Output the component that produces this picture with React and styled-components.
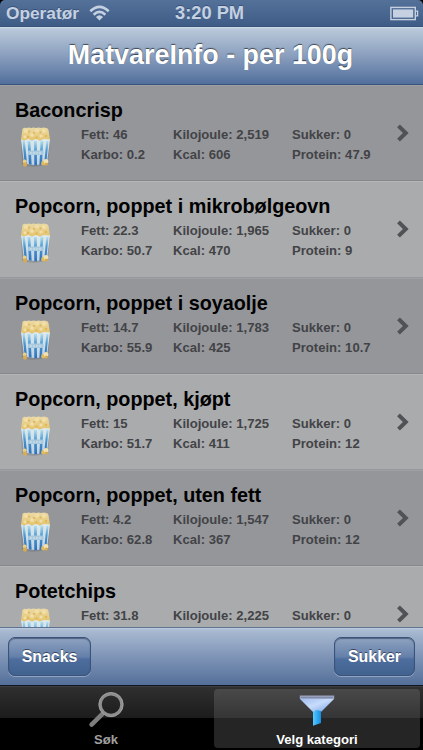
import React from 'react'
import styled, { createGlobalStyle, css } from 'styled-components'

const GlobalStyle = createGlobalStyle`
*{
  box-sizing: border-box;
}
body{
  margin: 0;
  background: #000;
  font-family: "Liberation Sans", Arial, sans-serif;
  font-weight: 700;
  overflow: hidden;
}
`

const Screen = styled.div`
width: 423px;
height: 750px;
display: flex;
flex-direction: column;
overflow: hidden;
background: #000;
`
const StatusBar = styled.div`
flex: none;
height: 26px;
padding: 0 4px 0 6px;
display: grid;
grid-template-columns: 169px auto 1fr;
align-items: center;
background: linear-gradient(#54719a, #3f5c86);
border-radius: 5px 5px 0 0;
color: #c5d1e1;
line-height: 26px;
text-shadow: 0 -1px 0 rgba(30,50,85,0.45);
`
const Carrier = styled.div`
display: flex;
align-items: center;
gap: 10px;
font-size: 17.3px;
white-space: nowrap;
`
const Clock = styled.div`
font-size: 18.3px;
`
const Battery = styled.div`
display: flex;
justify-content: flex-end;
`
const NavBar = styled.div`
flex: none;
height: 59px;
display: flex;
justify-content: center;
border-top: 1px solid #39557e;
border-bottom: 1px solid #38537c;
background: linear-gradient(#d0dce8 0, #b9c9da 2px, #8b9fbe 50%, #516f9c 100%);
`
const Heading = styled.h1`
margin: 0;
padding-right: 2px;
font-size: 26.9px;
line-height: 57px;
color: #fff;
text-shadow: 0 -1px 1px rgba(0,0,0,0.6);
white-space: nowrap;
`
const List = styled.div`
flex: none;
height: 542px;
overflow: hidden;
`
const Row = styled.div`
height: 96.3px;
padding: 13px 14px 0 15px;
border-top: 1px solid ${props => props.$light ? '#b4b5b7' : '#9fa0a4'};
border-bottom: 1px solid ${props => props.$light ? '#97989b' : '#86878b'};
background: ${props => props.$light ? '#aaabad' : '#95969a'};
display: grid;
grid-template-columns: 1fr 12px;
`
const Name = styled.div`
font-size: 19.8px;
line-height: 22px;
color: #000;
white-space: nowrap;
`
const Details = styled.div`
display: grid;
grid-template-columns: 66px 92px 119px 90px;
align-items: start;
padding-top: 3px;
`
const Picture = styled.div`
height: 44px;
padding: 2px 0 0 4px;
`
const Facts = styled.div`
padding-top: 1px;
font-size: 13.1px;
line-height: 20px;
color: #424346;
white-space: nowrap;
`
const Arrow = styled.div`
padding-top: 25px;
`
const Toolbar = styled.div`
flex: none;
height: 58px;
padding: 9px 8px 0;
display: flex;
justify-content: space-between;
align-items: flex-start;
border-top: 1px solid #5f7391;
background: linear-gradient(#c1cee0 0, #a9bad1 2px, #7f95b7 50%, #536f99 100%);
`
const BarButton = styled.button`
width: ${props => props.$width};
height: 39px;
padding: 0;
border: 1px solid #3a537b;
border-radius: 7px;
background: linear-gradient(#8fa3c1, #6580aa 50%, #4d6d9e 58%, #42628f);
box-shadow: inset 0 1px 1px rgba(30,45,75,0.55), 0 1px 0 rgba(200,215,235,0.45);
color: #fff;
font: 700 15.9px "Liberation Sans", Arial, sans-serif;
text-shadow: 0 -1px 0 rgba(0,0,0,0.5);
`
const TabBar = styled.div`
flex: none;
height: 65px;
padding: 3px 3px 3px 2px;
display: grid;
grid-template-columns: 208px 206px;
justify-content: space-between;
border-top: 1px solid #11151d;
box-shadow: inset 0 1px 0 #3c3d40;
background: linear-gradient(#303030 0, #1c1c1c 32px, #000 32px);
`
const Tab = styled.div`
display: flex;
flex-direction: column;
align-items: center;
padding-top: 3px;
color: #a0a0a0;
font-size: 13.1px;
line-height: 16px;

svg{
  display: block;
  margin-bottom: 4px;
}

${props => props.$active && css`
  color: #fff;
  border-radius: 4px;
  background: linear-gradient(#494949 0, #353535 29px, #252525 29px);
`}
`

const foods = [
  { name: 'Baconcrisp', fett: '46', karbo: '0.2', kj: '2,519', kcal: '606', sukker: '0', protein: '47.9' },
  { name: 'Popcorn, poppet i mikrobølgeovn', fett: '22.3', karbo: '50.7', kj: '1,965', kcal: '470', sukker: '0', protein: '9' },
  { name: 'Popcorn, poppet i soyaolje', fett: '14.7', karbo: '55.9', kj: '1,783', kcal: '425', sukker: '0', protein: '10.7' },
  { name: 'Popcorn, poppet, kjøpt', fett: '15', karbo: '51.7', kj: '1,725', kcal: '411', sukker: '0', protein: '12' },
  { name: 'Popcorn, poppet, uten fett', fett: '4.2', karbo: '62.8', kj: '1,547', kcal: '367', sukker: '0', protein: '12' },
  { name: 'Potetchips', fett: '31.8', kj: '2,225', sukker: '0' },
]

const Wifi = () => (
  <svg width="21" height="16" viewBox="0 0 22 17" fill="none" stroke="#c5d1e1" strokeWidth="2.8">
    <path d="M1.2 6.6Q11 -2.8 20.8 6.6" />
    <path d="M4.8 10.4Q11 4.4 17.2 10.4" />
    <path d="M7.2 12.8Q11 9.2 14.8 12.8L11 16.6Z" fill="#c5d1e1" stroke="none" />
  </svg>
)

const BatteryIcon = () => (
  <svg width="29" height="15" viewBox="0 0 29 15">
    <rect x="0.9" y="1.4" width="24.4" height="12.2" fill="none" stroke="#c5d1e1" strokeWidth="1.4" />
    <rect x="3" y="3.4" width="20.2" height="8.2" fill="#c5d1e1" />
    <path d="M25.6 5.2H27.6V9.8H25.6" fill="none" stroke="#c5d1e1" strokeWidth="1.3" />
  </svg>
)

const Popcorn = () => (
  <svg width="34" height="43" viewBox="0 0 34 43">
    <defs>
      <linearGradient id="corn" x1="0" y1="0" x2="0" y2="1">
        <stop offset="0" stopColor="#ead9a6" />
        <stop offset="1" stopColor="#e6c570" />
      </linearGradient>
      <linearGradient id="stripe" x1="0" y1="0" x2="0" y2="1">
        <stop offset="0" stopColor="#b4dcea" />
        <stop offset="0.4" stopColor="#4f9bd2" />
        <stop offset="1" stopColor="#2f6fb8" />
      </linearGradient>
      <linearGradient id="paper" x1="0" y1="0" x2="0" y2="1">
        <stop offset="0" stopColor="#dcebee" />
        <stop offset="1" stopColor="#bfd3e3" />
      </linearGradient>
    </defs>
    <path d="M3 39Q16 43 29 38L31 15H2Z" fill="#55575c" opacity="0.25" />
    <path d="M3.5 3Q5 1 7.5 2Q10 0.8 12 2Q15 0.8 17 2Q20 0.8 22 2Q25 0.8 27 2Q29 2 29.5 4L31 14H2Z" fill="url(#corn)" />
    <g fill="#f0dfa8">
      <circle cx="7" cy="5" r="2" />
      <circle cx="13" cy="9" r="1.9" />
      <circle cx="18" cy="4.5" r="2" />
      <circle cx="25" cy="5" r="2" />
      <circle cx="22" cy="10" r="1.6" />
      <circle cx="6" cy="11" r="1.4" />
    </g>
    <g fill="#dfb75c">
      <circle cx="10" cy="5.5" r="1.1" />
      <circle cx="15" cy="7" r="1.1" />
      <circle cx="21.5" cy="6.4" r="1.1" />
      <circle cx="9" cy="11" r="1.2" />
      <circle cx="17.5" cy="11.5" r="1.2" />
      <circle cx="27" cy="10" r="1.2" />
    </g>
    <path d="M2 13.5L5 14.5L9 13L13 14.5L17 13L21 14.5L25 13L31 13.5L28 37Q16 41 5 37Z" fill="url(#paper)" />
    <g fill="url(#stripe)">
      <path d="M3.5 15L5.8 15L8 37.5L5.6 37Z" />
      <path d="M8.6 15H11.4L12.6 38.8L9.9 38.3Z" />
      <path d="M15 15H17.8L18 39.2H15.3Z" />
      <path d="M21.6 15H24.4L22.9 38.4L20.4 38.9Z" />
      <path d="M27.4 15H29.5L27.3 37L25.2 37.5Z" />
    </g>
    <rect x="9" y="24.5" width="15.5" height="4.6" rx="1" fill="#a9c9df" />
    <path d="M11 27H22" stroke="#d8e6ee" strokeWidth="1.2" strokeDasharray="2 1" />
    <circle cx="5.8" cy="35.5" r="2" fill="#e6cf8c" />
    <circle cx="6" cy="38.6" r="2.1" fill="#d9ac50" />
    <circle cx="24.5" cy="37.2" r="2.4" fill="#dfb95f" />
    <circle cx="27" cy="35.4" r="2.4" fill="#f1e2b4" />
    <circle cx="27.3" cy="38" r="1.5" fill="#d9ac50" />
  </svg>
)

const Chevron = () => (
  <svg width="12" height="18" viewBox="0 0 12 18" fill="none" stroke="#515256" strokeWidth="4">
    <path d="M1.5 1.9L8.8 9L1.5 16.1" />
  </svg>
)

const Magnifier = () => (
  <svg width="36" height="36" viewBox="0 0 36 36" fill="none">
    <path d="M14.2 22.2L3.6 32.6" stroke="#7e7e7e" strokeWidth="4.6" strokeLinecap="round" />
    <circle cx="23" cy="12.6" r="10.8" stroke="#8e8e8e" strokeWidth="3.2" />
    <circle cx="23" cy="12.6" r="12.1" stroke="#a6a6a6" strokeWidth="0.7" />
  </svg>
)

const Funnel = () => (
  <svg width="36" height="36" viewBox="0 0 36 36">
    <defs>
      <linearGradient id="cone" x1="0" y1="0" x2="1" y2="1">
        <stop offset="0" stopColor="#9fbdf0" />
        <stop offset="0.45" stopColor="#c8dcfb" />
        <stop offset="1" stopColor="#6f9fe6" />
      </linearGradient>
      <linearGradient id="spout" x1="0" y1="0" x2="1" y2="0">
        <stop offset="0" stopColor="#58c9fb" />
        <stop offset="1" stopColor="#128ee4" />
      </linearGradient>
    </defs>
    <path d="M1 7H35L22 20H14Z" fill="url(#cone)" />
    <path d="M0.8 3.4H35.2V7H0.8Z" fill="#9aa3bf" />
    <path d="M2 5.4H34" stroke="#7f8aa8" strokeWidth="1" />
    <path d="M14 20L17.5 18L22 19V31L14 33.8Z" fill="url(#spout)" />
  </svg>
)

const FoodRow = ({ food, light }) => {
  return (
    <Row $light={light}>
      <div>
        <Name>{food.name}</Name>
        <Details>
          <Picture><Popcorn /></Picture>
          <Facts>
            <div>Fett: {food.fett}</div>
            {food.karbo && <div>Karbo: {food.karbo}</div>}
          </Facts>
          <Facts>
            <div>Kilojoule: {food.kj}</div>
            {food.kcal && <div>Kcal: {food.kcal}</div>}
          </Facts>
          <Facts>
            <div>Sukker: {food.sukker}</div>
            {food.protein && <div>Protein: {food.protein}</div>}
          </Facts>
        </Details>
      </div>
      <Arrow><Chevron /></Arrow>
    </Row>
  )
}

const App = () => {
  return (
    <Screen>
      <GlobalStyle />
      <StatusBar>
        <Carrier>
          <span>Operatør</span>
          <Wifi />
        </Carrier>
        <Clock>3:20 PM</Clock>
        <Battery><BatteryIcon /></Battery>
      </StatusBar>
      <NavBar>
        <Heading>MatvareInfo - per 100g</Heading>
      </NavBar>
      <List>
        {foods.map((food, i) => (
          <FoodRow key={food.name} food={food} light={i % 2 === 1} />
        ))}
      </List>
      <Toolbar>
        <BarButton $width="83px">Snacks</BarButton>
        <BarButton $width="81px">Sukker</BarButton>
      </Toolbar>
      <TabBar>
        <Tab>
          <Magnifier />
          Søk
        </Tab>
        <Tab $active>
          <Funnel />
          Velg kategori
        </Tab>
      </TabBar>
    </Screen>
  )
}

export default App
